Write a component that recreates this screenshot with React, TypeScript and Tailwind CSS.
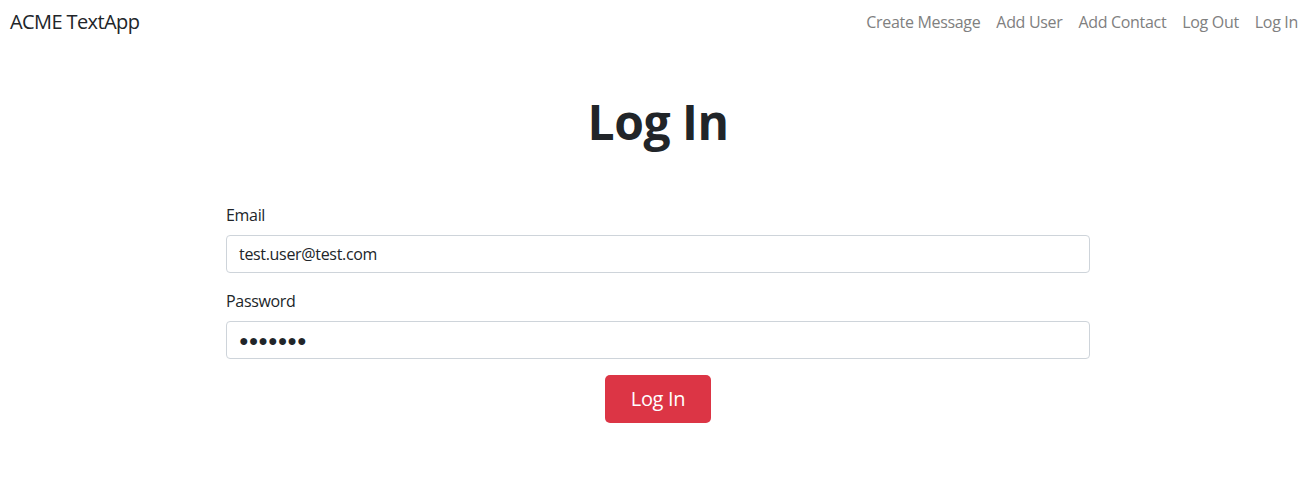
import React from "react";

export default function App() {
  const links = ["Create Message", "Add User", "Add Contact", "Log Out", "Log In"];
  return (
    <div className="min-h-[480px] bg-white text-[#212529] font-['Open_Sans',sans-serif] tracking-[-0.02em]">
      <nav className="flex items-center justify-between pl-[10px] pr-[1px] h-[44px]">
        <a className="text-[20px] leading-[30px] text-[#212529] tracking-[-0.03em]">ACME TextApp</a>
        <div className="flex">
          {links.map((l) => (
            <a key={l} className="px-2 text-[16px] leading-[24px] text-[#808080]">
              {l}
            </a>
          ))}
        </div>
      </nav>
      <div className="flex justify-center pl-[9px]">
        <div className="w-[864px] flex flex-col">
          <h1 className="mt-[49px] text-center text-[48px] leading-[58px] font-bold tracking-[-0.01em]">Log In</h1>
          <div className="mt-[52px] flex flex-col">
            <label className="text-[16px] leading-[24px] mb-2">Email</label>
            <div className="h-[38px] border border-[#ced4da] rounded-[4px] px-3 flex items-center text-[16px] text-[#212529]">
              test.user@test.com
            </div>
            <label className="mt-4 text-[16px] leading-[24px] mb-2">Password</label>
            <div className="h-[38px] border border-[#ced4da] rounded-[4px] px-3 flex items-center text-[16px] text-[#212529] tracking-[0px]">
              ●●●●●●●
            </div>
            <div className="flex justify-center mt-4">
              <button className="h-[48px] w-[106px] bg-[#dc3545] text-white text-[20px] rounded-[5px]">
                Log In
              </button>
            </div>
          </div>
        </div>
      </div>
    </div>
  );
}
